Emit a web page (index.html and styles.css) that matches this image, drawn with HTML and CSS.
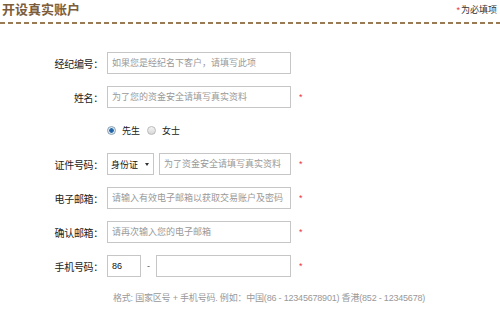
FILE: index.html
```html
<!DOCTYPE html>
<html lang="zh-CN">
<head>
    <meta charset="UTF-8">
    <title>开设真实账户</title>
    <link rel="stylesheet" href="styles.css">
</head>
<body>
    <!-- Page heading with required-field note -->
    <header class="page-head">
        <h1 class="page-title">开设真实账户</h1>
        <span class="required-note"><i class="star">*</i>为必填项</span>
    </header>

    <form class="account-form">
        <div class="form-row">
            <label class="form-label">经纪编号：</label>
            <input class="text-input" type="text" placeholder="如果您是经纪名下客户，请填写此项">
        </div>

        <div class="form-row">
            <label class="form-label">姓名：</label>
            <input class="text-input" type="text" placeholder="为了您的资金安全请填写真实资料">
            <span class="star">*</span>
        </div>

        <!-- Gender radios -->
        <div class="form-row radio-row">
            <span class="form-label"></span>
            <span class="radio checked"></span><span class="radio-text">先生</span>
            <span class="radio"></span><span class="radio-text">女士</span>
        </div>

        <div class="form-row">
            <label class="form-label">证件号码：</label>
            <div class="id-select">身份证<span class="caret"></span></div>
            <input class="text-input id-input" type="text" placeholder="为了资金安全请填写真实资料">
            <span class="star">*</span>
        </div>

        <div class="form-row">
            <label class="form-label">电子邮箱：</label>
            <input class="text-input" type="text" placeholder="请输入有效电子邮箱以获取交易账户及密码">
            <span class="star">*</span>
        </div>

        <div class="form-row">
            <label class="form-label">确认邮箱：</label>
            <input class="text-input" type="text" placeholder="请再次输入您的电子邮箱">
            <span class="star">*</span>
        </div>

        <div class="form-row">
            <label class="form-label">手机号码：</label>
            <input class="text-input code-input" type="text" value="86">
            <span class="dash">-</span>
            <input class="text-input phone-input" type="text">
            <span class="star">*</span>
        </div>

        <p class="phone-hint">格式: 国家区号 + 手机号码. 例如：中国(86 - 12345678901) 香港(852 - 12345678)</p>
    </form>
</body>
</html>
```

FILE: styles.css
```css
/* Base page */
body {
    margin: 0;
    font-family: "Liberation Sans", "Noto Sans CJK SC", sans-serif;
    color: #333;
    background: #fff;
    width: 500px;
}

/* Heading bar with dashed rule under it */
.page-head {
    display: flex;
    justify-content: space-between;
    align-items: flex-end;
    height: 22px;
    padding: 0 3px 2px 2px;
    background: repeating-linear-gradient(to right, #9a7a52 0, #9a7a52 5px, transparent 5px, transparent 8px) left bottom / 100% 2px no-repeat;
}

.page-title {
    margin: 0 0 4px;
    font-size: 13px;
    font-weight: bold;
    color: #7b5d3b;
    line-height: 16px;
}

.required-note {
    font-size: 9px;
    color: #333;
    margin-bottom: 6px;
}

.star {
    font-style: normal;
    color: #e8353a;
    font-size: 9px;
}

.required-note .star {
    margin-right: 1px;
}

/* Form layout */
.account-form {
    margin-top: 28px;
    display: flex;
    flex-direction: column;
    gap: 12px;
}

.form-row {
    display: flex;
    align-items: center;
    height: 22px;
}

.form-row .star {
    margin-left: 8px;
    align-self: flex-start;
    margin-top: 6px;
}

.form-label {
    width: 103px;
    flex-shrink: 0;
    text-align: right;
    font-size: 10px;
    color: #222;
    margin-right: 4px;
    letter-spacing: -0.3px;
}

.text-input {
    box-sizing: border-box;
    width: 184px;
    height: 22px;
    border: 1px solid #c6c6c6;
    padding: 0 4px;
    font-family: "Liberation Sans", "Noto Sans CJK SC", sans-serif;
    font-size: 9px;
    color: #333;
    outline: none;
}

.text-input::placeholder {
    color: #999;
}

/* Radio buttons */
.radio-row {
    height: 21px;
}

.radio {
    box-sizing: border-box;
    width: 9px;
    height: 9px;
    border-radius: 50%;
    border: 1px solid #b9b9b9;
    background: linear-gradient(#f4f4f4, #d8d8d8);
    margin: 0 6px 0 2px;
}

.radio.checked {
    margin-left: 0;
    border-color: #8aa0b4;
    background: radial-gradient(circle, #1f5f9e 0, #2a6fb0 2px, #dfe8f0 2.6px);
}

.radio-text {
    font-size: 9px;
    color: #222;
    margin-right: 5px;
}

/* ID type dropdown */
.id-select {
    box-sizing: border-box;
    width: 47px;
    height: 22px;
    border: 1px solid #c6c6c6;
    font-size: 9px;
    color: #111;
    display: flex;
    align-items: center;
    justify-content: space-between;
    padding: 0 4px 0 3px;
    margin-right: 5px;
}

.caret {
    width: 0;
    height: 0;
    border-left: 2.5px solid transparent;
    border-right: 2.5px solid transparent;
    border-top: 3px solid #333;
}

.id-input {
    width: 132px;
}

/* Phone number */
.code-input {
    width: 34px;
    color: #111;
}

.dash {
    width: 15px;
    text-align: center;
    font-size: 9px;
    color: #555;
}

.phone-input {
    width: 135px;
}

.phone-hint {
    margin: 2px 0 0 113px;
    font-size: 9px;
    color: #999;
    white-space: nowrap;
    letter-spacing: -0.2px;
}
```
